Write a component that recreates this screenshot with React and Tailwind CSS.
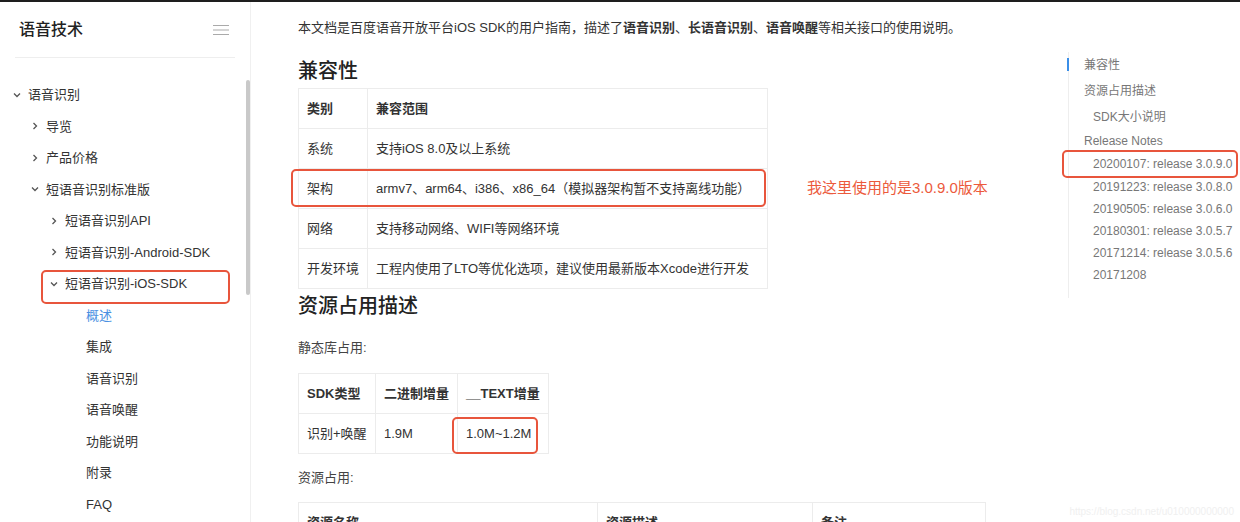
import React from 'react';

const font = { fontFamily: '"Liberation Sans", "Noto Sans CJK SC", sans-serif' };

const Chevron = ({ down }) => (
  <svg width="8" height="8" viewBox="0 0 8 8" className="text-[#555]">
    {down ? (
      <polyline points="1,2.5 4,5.5 7,2.5" fill="none" stroke="currentColor" strokeWidth="1.3" />
    ) : (
      <polyline points="2.5,1 5.5,4 2.5,7" fill="none" stroke="currentColor" strokeWidth="1.3" />
    )}
  </svg>
);

const navItems = [
  { label: '语音识别', pl: 'pl-[8px]', chevron: 'down' },
  { label: '导览', pl: 'pl-[26px]', chevron: 'right' },
  { label: '产品价格', pl: 'pl-[26px]', chevron: 'right' },
  { label: '短语音识别标准版', pl: 'pl-[26px]', chevron: 'down' },
  { label: '短语音识别API', pl: 'pl-[45px]', chevron: 'right' },
  { label: '短语音识别-Android-SDK', pl: 'pl-[45px]', chevron: 'right' },
  { label: '短语音识别-iOS-SDK', pl: 'pl-[45px]', chevron: 'down', boxed: true },
  { label: '概述', pl: 'pl-[86px]', active: true },
  { label: '集成', pl: 'pl-[86px]' },
  { label: '语音识别', pl: 'pl-[86px]' },
  { label: '语音唤醒', pl: 'pl-[86px]' },
  { label: '功能说明', pl: 'pl-[86px]' },
  { label: '附录', pl: 'pl-[86px]' },
  { label: 'FAQ', pl: 'pl-[86px]' },
];

const tocItems = [
  { label: '兼容性', cls: 'pl-[15px] h-[26px] text-[#3b8fe8]', active: true },
  { label: '资源占用描述', cls: 'pl-[15px] h-[26px]' },
  { label: 'SDK大小说明', cls: 'pl-[24px] h-[26px]' },
  { label: 'Release Notes', cls: 'pl-[15px] h-[22px]' },
  { label: '20200107: release 3.0.9.0', cls: 'pl-[24px] h-[24px]', boxed: true },
  { label: '20191223: release 3.0.8.0', cls: 'pl-[24px] h-[22px]' },
  { label: '20190505: release 3.0.6.0', cls: 'pl-[24px] h-[22px]' },
  { label: '20180301: release 3.0.5.7', cls: 'pl-[24px] h-[22px]' },
  { label: '20171214: release 3.0.5.6', cls: 'pl-[24px] h-[22px]' },
  { label: '20171208', cls: 'pl-[24px] h-[22px]' },
];

const Sidebar = () => (
  <aside className="relative w-[251px] shrink-0 border-r border-[#f0f0f0] h-[520px] overflow-hidden">
    <div className="mx-[15px] h-[56px] flex items-center justify-between border-b border-[#eeeeee] pl-[4px] pr-[6px]">
      <span className="text-[16px] text-[#222] font-medium">语音技术</span>
      <svg width="16" height="12" viewBox="0 0 16 12" className="text-[#aaa]">
        <path d="M0 1.5h16M0 6h16M0 10.5h16" stroke="currentColor" strokeWidth="1" />
      </svg>
    </div>
    <div className="mt-[21px]">
      {navItems.map((item, i) => (
        <div key={i} className={`relative h-[31.5px] flex items-center ${item.pl}`}>
          {item.chevron && (
            <span className="w-[18px] flex items-center justify-center mr-[2px]">
              <Chevron down={item.chevron === 'down'} />
            </span>
          )}
          <span className={`text-[13px] ${item.active ? 'text-[#4a90e2]' : 'text-[#333]'}`}>{item.label}</span>
          {item.boxed && (
            <div className="absolute left-[41px] top-[2px] w-[189px] h-[34px] border-2 border-[#e8553c] rounded-[5px]" />
          )}
        </div>
      ))}
    </div>
    <div className="absolute left-[246px] top-[78px] w-[4px] h-[215px] rounded-full bg-[#c9c9c9]" />
  </aside>
);

const Cell = ({ children, className = '', head }) => (
  <td className={`border border-[#ececec] px-[8px] h-[40px] whitespace-nowrap text-[13px] text-[#333] ${head ? 'font-bold' : ''} ${className}`}>
    {children}
  </td>
);

const Main = () => (
  <main className="flex-1 pl-[47px] pt-[16px]">
    <p className="text-[13px] leading-[20px] text-[#333]">
      本文档是百度语音开放平台iOS SDK的用户指南，描述了<b className="font-bold">语音识别</b>、
      <b className="font-bold">长语音识别</b>、<b className="font-bold">语音唤醒</b>等相关接口的使用说明。
    </p>
    <h2 className="mt-[19px] text-[20px] leading-[28px] font-medium text-[#222]">兼容性</h2>
    <div className="relative mt-[3px]">
      <table className="border-collapse w-[470px]">
        <tbody>
          <tr>
            <Cell head className="w-[68px]">类别</Cell>
            <Cell head>兼容范围</Cell>
          </tr>
          <tr>
            <Cell>系统</Cell>
            <Cell>支持iOS 8.0及以上系统</Cell>
          </tr>
          <tr>
            <Cell>架构</Cell>
            <Cell>armv7、arm64、i386、x86_64（模拟器架构暂不支持离线功能）</Cell>
          </tr>
          <tr>
            <Cell>网络</Cell>
            <Cell>支持移动网络、WIFI等网络环境</Cell>
          </tr>
          <tr>
            <Cell>开发环境</Cell>
            <Cell>工程内使用了LTO等优化选项，建议使用最新版本Xcode进行开发</Cell>
          </tr>
        </tbody>
      </table>
      <div className="absolute left-[-7px] top-[81px] w-[475px] h-[38px] border-2 border-[#e8553c] rounded-[5px]" />
      <span className="absolute left-[509px] top-[90px] text-[15px] leading-[20px] text-[#ec5a3c] whitespace-nowrap">
        我这里使用的是3.0.9.0版本
      </span>
    </div>
    <h2 className="mt-[3px] text-[20px] leading-[28px] font-medium text-[#222]">资源占用描述</h2>
    <p className="mt-[18px] text-[13px] leading-[20px] text-[#444]">静态库占用:</p>
    <div className="relative mt-[15px]">
      <table className="border-collapse">
        <tbody>
          <tr>
            <Cell head className="w-[77px]">SDK类型</Cell>
            <Cell head className="w-[82px]">二进制增量</Cell>
            <Cell head className="w-[87px]">__TEXT增量</Cell>
          </tr>
          <tr>
            <Cell>识别+唤醒</Cell>
            <Cell>1.9M</Cell>
            <Cell>1.0M~1.2M</Cell>
          </tr>
        </tbody>
      </table>
      <div className="absolute left-[154px] top-[44px] w-[86px] h-[37px] border-2 border-[#e8553c] rounded-[5px]" />
    </div>
    <p className="mt-[14px] text-[13px] leading-[20px] text-[#444]">资源占用:</p>
    <table className="mt-[14px] border-collapse">
      <tbody>
        <tr>
          <Cell head className="w-[299px]">资源名称</Cell>
          <Cell head className="w-[215px]">资源描述</Cell>
          <Cell head className="w-[173px]">备注</Cell>
        </tr>
      </tbody>
    </table>
  </main>
);

const Toc = () => (
  <nav className="w-[172px] shrink-0 pt-[50px]">
    <div className="relative border-l border-[#eeeeee]">
      {tocItems.map((item, i) => (
        <div key={i} className={`relative flex items-center text-[12px] text-[#777] whitespace-nowrap ${item.cls}`}>
          {item.active && <span className="absolute left-[-2px] top-[6px] w-[2px] h-[13px] bg-[#3b8fe8]" />}
          {item.label}
          {item.boxed && (
            <div className="absolute left-[-7px] top-[-2px] w-[176px] h-[28px] border-2 border-[#e8553c] rounded-[5px]" />
          )}
        </div>
      ))}
      <div className="h-[12px]" />
    </div>
  </nav>
);

export default function App() {
  return (
    <div className="relative w-[1240px] h-[522px] overflow-hidden bg-white" style={font}>
      <div className="h-[2px] bg-[#1e1e1e]" />
      <div className="flex">
        <Sidebar />
        <Main />
        <Toc />
      </div>
      <span className="absolute right-[6px] bottom-[3px] text-[10px] text-[#f0f0f0]">https://blog.csdn.net/u010000000000</span>
    </div>
  );
}
